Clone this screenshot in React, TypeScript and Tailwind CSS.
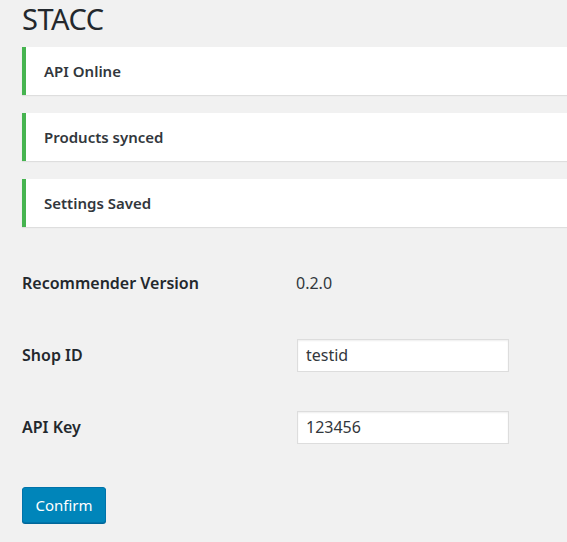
export default function App() {
  const notices = ["API Online", "Products synced", "Settings Saved"]

  return (
    <div className="min-h-screen bg-[#f1f1f1] pl-[22px] text-[#23282d] font-['Noto_Sans','Open_Sans',sans-serif] overflow-hidden">
      {/* Page title */}
      <h1 className="pt-[1px] text-[29px] leading-[36px] font-normal tracking-[-0.5px]">STACC</h1>

      {/* Notices */}
      <div className="mt-[10px] flex flex-col gap-[18px]">
        {notices.map((n) => (
          <div
            key={n}
            className="h-[48px] flex items-center bg-white border-l-4 border-[#46b450] pl-[18px] shadow-[0_1px_1px_rgba(0,0,0,0.08)]"
          >
            <span className="text-[15px] font-semibold text-[#32373c]">{n}</span>
          </div>
        ))}
      </div>

      {/* Settings table */}
      <div className="mt-[20px] flex flex-col">
        <div className="h-[72px] flex items-center">
          <div className="w-[274px] text-[16px] font-semibold">Recommender Version</div>
          <div className="text-[16px] text-[#32373c]">0.2.0</div>
        </div>
        <div className="h-[72px] flex items-center">
          <label className="w-[275px] text-[16px] font-semibold">Shop ID</label>
          <input
            defaultValue="testid"
            className="w-[212px] h-[33px] bg-white border border-[#dddddd] shadow-[inset_0_1px_2px_rgba(0,0,0,0.07)] px-[8px] text-[16px] text-[#32373c] outline-none"
          />
        </div>
        <div className="h-[72px] flex items-center">
          <label className="w-[275px] text-[16px] font-semibold">API Key</label>
          <input
            defaultValue="123456"
            className="w-[212px] h-[33px] bg-white border border-[#dddddd] shadow-[inset_0_1px_2px_rgba(0,0,0,0.07)] px-[8px] text-[16px] text-[#32373c] outline-none"
          />
        </div>
      </div>

      <button
        type="button"
        className="mt-[24px] w-[84px] h-[36px] rounded-[3px] bg-[#0085ba] border border-[#0073aa] shadow-[0_1px_0_#006799] text-white text-[15px]"
      >
        Confirm
      </button>
    </div>
  )
}
